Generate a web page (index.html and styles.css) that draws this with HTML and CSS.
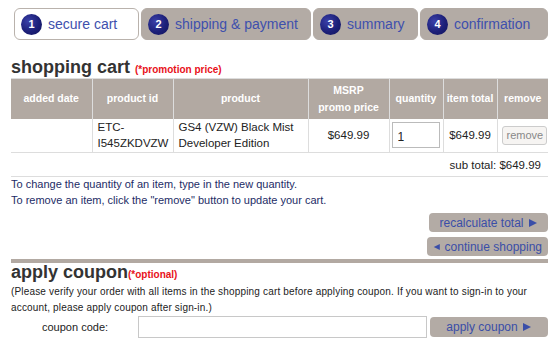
FILE: index.html
```html
<!DOCTYPE html>
<html>
<head>
<meta charset="utf-8">
<link rel="stylesheet" href="styles.css">
</head>
<body>
<div class="page">
  <nav class="steps">
    <div class="step active step1"><span class="num">1</span><span class="label">secure cart</span></div>
    <div class="step step2"><span class="num">2</span><span class="label">shipping &amp; payment</span></div>
    <div class="step step3"><span class="num">3</span><span class="label">summary</span></div>
    <div class="step step4"><span class="num">4</span><span class="label">confirmation</span></div>
  </nav>

  <h1 class="title cart-title">shopping cart <span class="note">(*promotion price)</span></h1>

  <table class="cart">
    <colgroup>
      <col class="c1"><col class="c2"><col class="c3"><col class="c4"><col class="c5"><col class="c6"><col class="c7">
    </colgroup>
    <thead>
      <tr>
        <th>added date</th>
        <th>product id</th>
        <th>product</th>
        <th>MSRP<br>promo price</th>
        <th>quantity</th>
        <th>item total</th>
        <th>remove</th>
      </tr>
    </thead>
    <tbody>
      <tr class="item">
        <td></td>
        <td class="left">ETC-<br>I545ZKDVZW</td>
        <td class="left">GS4 (VZW) Black Mist Developer Edition</td>
        <td>$649.99</td>
        <td><input class="qty" type="text" value="1"></td>
        <td>$649.99</td>
        <td><button class="remove">remove</button></td>
      </tr>
      <tr class="subtotal">
        <td colspan="7">sub total: $649.99</td>
      </tr>
    </tbody>
  </table>

  <p class="help">To change the quantity of an item, type in the new quantity.<br>To remove an item, click the "remove" button to update your cart.</p>

  <div class="actions">
    <button class="btn recalc">recalculate total <svg class="arr" width="10" height="10" viewBox="0 0 10 10"><polygon points="1,1 9,5 1,9" fill="#3a4ea8"/></svg></button>
    <button class="btn cont"><svg class="arr" width="10" height="10" viewBox="0 0 10 10"><polygon points="9,1 1,5 9,9" fill="#3a4ea8"/></svg> continue shopping</button>
  </div>

  <div class="bar"></div>

  <h2 class="title coupon-title">apply coupon<span class="note">(*optional)</span></h2>
  <p class="coupon-note">(Please verify your order with all items in the shopping cart before applying coupon. If you want to sign-in to your account, please apply coupon after sign-in.)</p>
  <div class="coupon-row">
    <label class="coupon-label">coupon code:</label>
    <input class="coupon-input" type="text">
    <button class="btn apply">apply coupon <svg class="arr" width="10" height="10" viewBox="0 0 10 10"><polygon points="1,1 9,5 1,9" fill="#3a4ea8"/></svg></button>
  </div>
</div>
</body>
</html>
```

FILE: styles.css
```css
* { box-sizing: border-box; }
body {
  margin: 0;
  background: #fff;
  font-family: "Liberation Sans", Arial, sans-serif;
  color: #222;
}
.page {
  width: 559px;
  padding: 8px 11px 0 11px;
}
.steps {
  display: flex;
  gap: 2px;
  padding-left: 3px;
  height: 32px;
}
.step {
  display: flex;
  align-items: center;
  gap: 6px;
  padding-left: 6px;
  height: 32px;
  background: #b3aba5;
  border-radius: 6px;
  border: 1px solid #b3aba5;
}
.step.active {
  background: #fff;
  border-color: #b9b2ac;
}
.step1 { width: 125px; }
.step2 { width: 170px; }
.step3 { width: 105px; }
.step4 { width: 128px; }
.num {
  width: 21px;
  height: 21px;
  border-radius: 50%;
  background: radial-gradient(circle at 35% 35%, #3a40a8 0%, #1c1f78 55%, #11135a 100%);
  color: #fff;
  font-weight: bold;
  font-size: 11px;
  display: flex;
  align-items: center;
  justify-content: center;
  flex: none;
}
.label {
  font-size: 14px;
  color: #3e50ad;
  white-space: nowrap;
}
.title {
  margin: 0;
  font-size: 18px;
  font-weight: bold;
  color: #333;
}
.cart-title {
  margin-top: 16px;
  line-height: 22px;
  height: 22px;
}
.note {
  font-size: 10px;
  color: #e8101a;
  font-weight: bold;
}
.cart {
  width: 537px;
  border-collapse: collapse;
  font-size: 11px;
  table-layout: fixed;
}
.c1 { width: 81px; }
.c2 { width: 81px; }
.c3 { width: 135px; }
.c4 { width: 81px; }
.c5 { width: 54px; }
.c6 { width: 54px; }
.c7 { width: 51px; }
.cart th {
  background: #b2a9a2;
  color: #fff;
  font-size: 10.5px;
  font-weight: bold;
  height: 40px;
  padding: 0 2px;
  line-height: 17px;
  border-left: 1px solid #ddd;
  border-top: 1px solid #ddd;
}
.cart th:first-child { border-left: none; }
.cart td {
  text-align: center;
  border-left: 1px solid #ddd;
  border-bottom: 1px solid #ddd;
  padding: 0 5px;
  line-height: 16px;
  font-size: 11.5px;
}
.cart td:first-child { border-left: none; }
.cart td.left { text-align: left; }
.item td { height: 34px; }
.qty {
  width: 48px;
  height: 26px;
  border: 1px solid #bbb;
  font-family: "Liberation Sans", Arial, sans-serif;
  font-size: 12px;
  padding: 3px 5px 0;
  color: #222;
  display: block;
}
.item td:nth-child(5) { padding: 0 0 0 2px; }
.item td:nth-child(7) { padding: 0 2px 0 4px; }
.remove {
  font-family: "Liberation Sans", Arial, sans-serif;
  font-size: 11px;
  color: #888;
  background: #f6f4f2;
  border: 1px solid #ccc;
  border-radius: 3px;
  padding: 0 4px;
  height: 19px;
  width: 45px;
  display: block;
}
.subtotal td {
  text-align: right;
  height: 24px;
  padding-right: 7px;
}
.help {
  margin: -1px 0 0 0;
  font-size: 11px;
  line-height: 16px;
  color: #1d2c66;
}
.actions {
  display: flex;
  flex-direction: column;
  align-items: flex-end;
  gap: 5px;
  margin-top: 5px;
}
.btn {
  background: #b3aba5;
  border: none;
  border-radius: 4px;
  font-family: "Liberation Sans", Arial, sans-serif;
  font-size: 12px;
  color: #3a4ea8;
  height: 19px;
  padding: 0 6px;
  white-space: nowrap;
  display: flex;
  align-items: center;
  justify-content: center;
  gap: 4px;
}
.arr { display: block; }
.recalc { width: 119px; }
.cont { width: 121px; }
.bar {
  height: 4px;
  background: #b2a9a2;
  margin-top: 3px;
}
.coupon-title {
  margin-top: 0;
  line-height: 19px;
}
.coupon-note {
  margin: 0;
  font-size: 10px;
  line-height: 16px;
  color: #222;
  letter-spacing: 0.17px;
}
.coupon-row {
  display: flex;
  align-items: center;
  margin-top: 0;
}
.coupon-label {
  font-size: 11px;
  width: 127px;
  padding-left: 31px;
}
.coupon-input {
  width: 289px;
  height: 22px;
  border: 1px solid #c8c8c8;
}
.apply {
  margin-left: 3px;
  width: 118px;
  height: 20px;
}
```
